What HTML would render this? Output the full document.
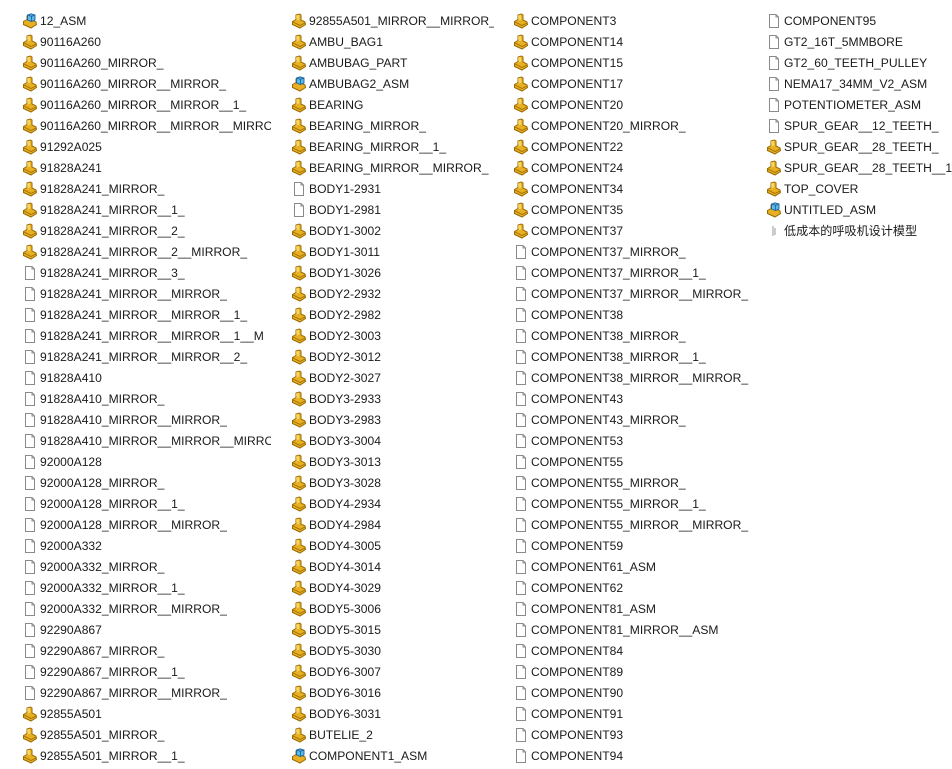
<!DOCTYPE html>
<html><head><meta charset="utf-8"><style>
html,body{margin:0;padding:0;background:#fff;width:952px;height:769px;overflow:hidden}
body{font-family:"Liberation Sans","Noto Sans CJK SC",sans-serif;font-size:12.1px;color:#1a1a1a;position:relative}
.c{position:absolute;top:11px;overflow:hidden;white-space:nowrap}
.r{height:21px;line-height:21px;position:relative;padding-left:18px}
.r svg{position:absolute;left:0;top:2px;width:16px;height:16px}
</style></head><body>
<svg width="0" height="0" style="position:absolute">
<defs>
<symbol id="p" viewBox="0 0 16 16"><path d="M1.5 8.5 L5 6.5 L5 2 L8.5 1 L10 2 L10 7 L14 9 L14.5 11.5 L9 15 L1.5 11.5 Z" fill="#e8b021" stroke="#9a6a05" stroke-width="1"/><path d="M5 2.5 L8 1.8 L8.5 6.5 L5.5 7.5Z" fill="#f7d560"/><path d="M2 9 L9 12.5 L14 10" fill="none" stroke="#9a6a05" stroke-width="0.8"/></symbol>
<symbol id="a" viewBox="0 0 16 16"><path d="M1.5 8.5 L5 6.5 L5 3 L10 3 L10 7 L14 9 L14.5 11.5 L9 15 L1.5 11.5 Z" fill="#e8b021" stroke="#9a6a05" stroke-width="1"/><path d="M5.5 2 L9 0.8 L13 2 L13 7 L9.5 8.5 L5.5 7Z" fill="#5bb8e8" stroke="#1a5f9a" stroke-width="0.9"/><path d="M5.5 2 L9.5 3.3 L13 2 M9.5 3.3 L9.5 8.5" fill="none" stroke="#1a5f9a" stroke-width="0.8"/></symbol>
<symbol id="d" viewBox="0 0 16 16"><path d="M3.5 1.5 H10 L12.5 4 V14.5 H3.5 Z" fill="#fff" stroke="#8a8a8a" stroke-width="1"/><path d="M10 1.5 V4 H12.5" fill="none" stroke="#8a8a8a" stroke-width="1"/></symbol>
<symbol id="s" viewBox="0 0 16 16"><path d="M7 3 V13 M9 5 V12" stroke="#9a9a9a" stroke-width="1"/></symbol>
</defs></svg>

<div class="c" style="left:22px;width:249px">
<div class="r"><svg><use href="#a"/></svg>12_ASM</div>
<div class="r"><svg><use href="#p"/></svg>90116A260</div>
<div class="r"><svg><use href="#p"/></svg>90116A260_MIRROR_</div>
<div class="r"><svg><use href="#p"/></svg>90116A260_MIRROR__MIRROR_</div>
<div class="r"><svg><use href="#p"/></svg>90116A260_MIRROR__MIRROR__1_</div>
<div class="r"><svg><use href="#p"/></svg>90116A260_MIRROR__MIRROR__MIRRO</div>
<div class="r"><svg><use href="#p"/></svg>91292A025</div>
<div class="r"><svg><use href="#p"/></svg>91828A241</div>
<div class="r"><svg><use href="#p"/></svg>91828A241_MIRROR_</div>
<div class="r"><svg><use href="#p"/></svg>91828A241_MIRROR__1_</div>
<div class="r"><svg><use href="#p"/></svg>91828A241_MIRROR__2_</div>
<div class="r"><svg><use href="#p"/></svg>91828A241_MIRROR__2__MIRROR_</div>
<div class="r"><svg><use href="#d"/></svg>91828A241_MIRROR__3_</div>
<div class="r"><svg><use href="#d"/></svg>91828A241_MIRROR__MIRROR_</div>
<div class="r"><svg><use href="#d"/></svg>91828A241_MIRROR__MIRROR__1_</div>
<div class="r"><svg><use href="#d"/></svg>91828A241_MIRROR__MIRROR__1__M</div>
<div class="r"><svg><use href="#d"/></svg>91828A241_MIRROR__MIRROR__2_</div>
<div class="r"><svg><use href="#d"/></svg>91828A410</div>
<div class="r"><svg><use href="#d"/></svg>91828A410_MIRROR_</div>
<div class="r"><svg><use href="#d"/></svg>91828A410_MIRROR__MIRROR_</div>
<div class="r"><svg><use href="#d"/></svg>91828A410_MIRROR__MIRROR__MIRRO</div>
<div class="r"><svg><use href="#d"/></svg>92000A128</div>
<div class="r"><svg><use href="#d"/></svg>92000A128_MIRROR_</div>
<div class="r"><svg><use href="#d"/></svg>92000A128_MIRROR__1_</div>
<div class="r"><svg><use href="#d"/></svg>92000A128_MIRROR__MIRROR_</div>
<div class="r"><svg><use href="#d"/></svg>92000A332</div>
<div class="r"><svg><use href="#d"/></svg>92000A332_MIRROR_</div>
<div class="r"><svg><use href="#d"/></svg>92000A332_MIRROR__1_</div>
<div class="r"><svg><use href="#d"/></svg>92000A332_MIRROR__MIRROR_</div>
<div class="r"><svg><use href="#d"/></svg>92290A867</div>
<div class="r"><svg><use href="#d"/></svg>92290A867_MIRROR_</div>
<div class="r"><svg><use href="#d"/></svg>92290A867_MIRROR__1_</div>
<div class="r"><svg><use href="#d"/></svg>92290A867_MIRROR__MIRROR_</div>
<div class="r"><svg><use href="#p"/></svg>92855A501</div>
<div class="r"><svg><use href="#p"/></svg>92855A501_MIRROR_</div>
<div class="r"><svg><use href="#p"/></svg>92855A501_MIRROR__1_</div>
</div>

<div class="c" style="left:291px;width:203px">
<div class="r"><svg><use href="#p"/></svg>92855A501_MIRROR__MIRROR_</div>
<div class="r"><svg><use href="#p"/></svg>AMBU_BAG1</div>
<div class="r"><svg><use href="#p"/></svg>AMBUBAG_PART</div>
<div class="r"><svg><use href="#a"/></svg>AMBUBAG2_ASM</div>
<div class="r"><svg><use href="#p"/></svg>BEARING</div>
<div class="r"><svg><use href="#p"/></svg>BEARING_MIRROR_</div>
<div class="r"><svg><use href="#p"/></svg>BEARING_MIRROR__1_</div>
<div class="r"><svg><use href="#p"/></svg>BEARING_MIRROR__MIRROR_</div>
<div class="r"><svg><use href="#d"/></svg>BODY1-2931</div>
<div class="r"><svg><use href="#d"/></svg>BODY1-2981</div>
<div class="r"><svg><use href="#p"/></svg>BODY1-3002</div>
<div class="r"><svg><use href="#p"/></svg>BODY1-3011</div>
<div class="r"><svg><use href="#p"/></svg>BODY1-3026</div>
<div class="r"><svg><use href="#p"/></svg>BODY2-2932</div>
<div class="r"><svg><use href="#p"/></svg>BODY2-2982</div>
<div class="r"><svg><use href="#p"/></svg>BODY2-3003</div>
<div class="r"><svg><use href="#p"/></svg>BODY2-3012</div>
<div class="r"><svg><use href="#p"/></svg>BODY2-3027</div>
<div class="r"><svg><use href="#p"/></svg>BODY3-2933</div>
<div class="r"><svg><use href="#p"/></svg>BODY3-2983</div>
<div class="r"><svg><use href="#p"/></svg>BODY3-3004</div>
<div class="r"><svg><use href="#p"/></svg>BODY3-3013</div>
<div class="r"><svg><use href="#p"/></svg>BODY3-3028</div>
<div class="r"><svg><use href="#p"/></svg>BODY4-2934</div>
<div class="r"><svg><use href="#p"/></svg>BODY4-2984</div>
<div class="r"><svg><use href="#p"/></svg>BODY4-3005</div>
<div class="r"><svg><use href="#p"/></svg>BODY4-3014</div>
<div class="r"><svg><use href="#p"/></svg>BODY4-3029</div>
<div class="r"><svg><use href="#p"/></svg>BODY5-3006</div>
<div class="r"><svg><use href="#p"/></svg>BODY5-3015</div>
<div class="r"><svg><use href="#p"/></svg>BODY5-3030</div>
<div class="r"><svg><use href="#p"/></svg>BODY6-3007</div>
<div class="r"><svg><use href="#p"/></svg>BODY6-3016</div>
<div class="r"><svg><use href="#p"/></svg>BODY6-3031</div>
<div class="r"><svg><use href="#p"/></svg>BUTELIE_2</div>
<div class="r"><svg><use href="#a"/></svg>COMPONENT1_ASM</div>
</div>

<div class="c" style="left:513px;width:240px">
<div class="r"><svg><use href="#p"/></svg>COMPONENT3</div>
<div class="r"><svg><use href="#p"/></svg>COMPONENT14</div>
<div class="r"><svg><use href="#p"/></svg>COMPONENT15</div>
<div class="r"><svg><use href="#p"/></svg>COMPONENT17</div>
<div class="r"><svg><use href="#p"/></svg>COMPONENT20</div>
<div class="r"><svg><use href="#p"/></svg>COMPONENT20_MIRROR_</div>
<div class="r"><svg><use href="#p"/></svg>COMPONENT22</div>
<div class="r"><svg><use href="#p"/></svg>COMPONENT24</div>
<div class="r"><svg><use href="#p"/></svg>COMPONENT34</div>
<div class="r"><svg><use href="#p"/></svg>COMPONENT35</div>
<div class="r"><svg><use href="#p"/></svg>COMPONENT37</div>
<div class="r"><svg><use href="#d"/></svg>COMPONENT37_MIRROR_</div>
<div class="r"><svg><use href="#d"/></svg>COMPONENT37_MIRROR__1_</div>
<div class="r"><svg><use href="#d"/></svg>COMPONENT37_MIRROR__MIRROR_</div>
<div class="r"><svg><use href="#d"/></svg>COMPONENT38</div>
<div class="r"><svg><use href="#d"/></svg>COMPONENT38_MIRROR_</div>
<div class="r"><svg><use href="#d"/></svg>COMPONENT38_MIRROR__1_</div>
<div class="r"><svg><use href="#d"/></svg>COMPONENT38_MIRROR__MIRROR_</div>
<div class="r"><svg><use href="#d"/></svg>COMPONENT43</div>
<div class="r"><svg><use href="#d"/></svg>COMPONENT43_MIRROR_</div>
<div class="r"><svg><use href="#d"/></svg>COMPONENT53</div>
<div class="r"><svg><use href="#d"/></svg>COMPONENT55</div>
<div class="r"><svg><use href="#d"/></svg>COMPONENT55_MIRROR_</div>
<div class="r"><svg><use href="#d"/></svg>COMPONENT55_MIRROR__1_</div>
<div class="r"><svg><use href="#d"/></svg>COMPONENT55_MIRROR__MIRROR_</div>
<div class="r"><svg><use href="#d"/></svg>COMPONENT59</div>
<div class="r"><svg><use href="#d"/></svg>COMPONENT61_ASM</div>
<div class="r"><svg><use href="#d"/></svg>COMPONENT62</div>
<div class="r"><svg><use href="#d"/></svg>COMPONENT81_ASM</div>
<div class="r"><svg><use href="#d"/></svg>COMPONENT81_MIRROR__ASM</div>
<div class="r"><svg><use href="#d"/></svg>COMPONENT84</div>
<div class="r"><svg><use href="#d"/></svg>COMPONENT89</div>
<div class="r"><svg><use href="#d"/></svg>COMPONENT90</div>
<div class="r"><svg><use href="#d"/></svg>COMPONENT91</div>
<div class="r"><svg><use href="#d"/></svg>COMPONENT93</div>
<div class="r"><svg><use href="#d"/></svg>COMPONENT94</div>
</div>

<div class="c" style="left:766px;width:186px">
<div class="r"><svg><use href="#d"/></svg>COMPONENT95</div>
<div class="r"><svg><use href="#d"/></svg>GT2_16T_5MMBORE</div>
<div class="r"><svg><use href="#d"/></svg>GT2_60_TEETH_PULLEY</div>
<div class="r"><svg><use href="#d"/></svg>NEMA17_34MM_V2_ASM</div>
<div class="r"><svg><use href="#d"/></svg>POTENTIOMETER_ASM</div>
<div class="r"><svg><use href="#d"/></svg>SPUR_GEAR__12_TEETH_</div>
<div class="r"><svg><use href="#p"/></svg>SPUR_GEAR__28_TEETH_</div>
<div class="r"><svg><use href="#p"/></svg>SPUR_GEAR__28_TEETH__1_</div>
<div class="r"><svg><use href="#p"/></svg>TOP_COVER</div>
<div class="r"><svg><use href="#a"/></svg>UNTITLED_ASM</div>
<div class="r"><svg><use href="#s"/></svg>低成本的呼吸机设计模型</div>
</div>
</body></html>
